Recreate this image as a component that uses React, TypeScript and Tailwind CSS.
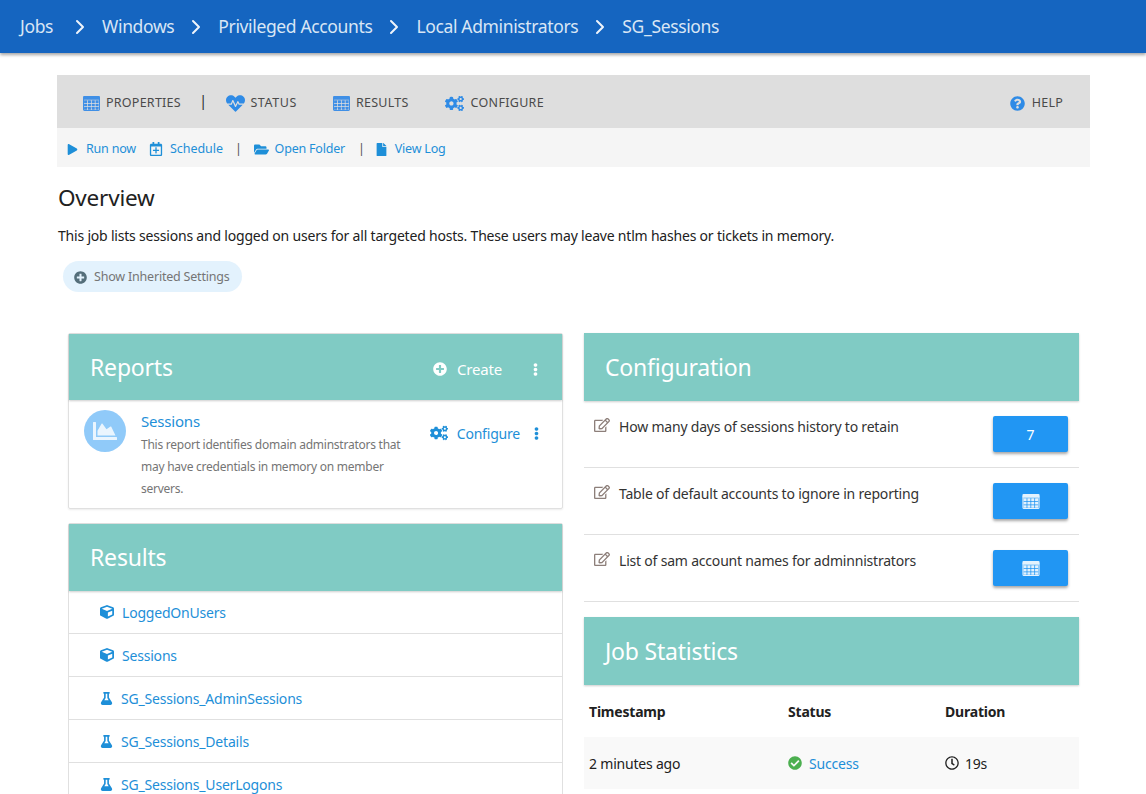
import {
  FaHeartbeat, FaCogs, FaPlay, FaRegCalendarPlus, FaFolderOpen, FaFile, FaPlusCircle,
  FaEllipsisV, FaChartArea, FaCube, FaFlask, FaRegEdit, FaCheckCircle, FaRegClock, FaQuestionCircle,
} from "react-icons/fa"
import { ChevronRight } from "lucide-react"

const crumbs = ["Windows", "Privileged Accounts", "Local Administrators", "SG_Sessions"]

const results = [
  { name: "LoggedOnUsers", icon: "cube" },
  { name: "Sessions", icon: "cube" },
  { name: "SG_Sessions_AdminSessions", icon: "flask" },
  { name: "SG_Sessions_Details", icon: "flask" },
  { name: "SG_Sessions_UserLogons", icon: "flask" },
]

const settings = [
  { label: "How many days of sessions history to retain", value: "7" },
  { label: "Table of default accounts to ignore in reporting" },
  { label: "List of sam account names for adminnistrators" },
]

// font awesome 4 style table: header row plus 3 rows of 4 cells
function TableIcon({ className }: { className?: string }) {
  const cells = []
  for (let row = 0; row < 3; row++) {
    for (let col = 0; col < 4; col++) {
      cells.push(<rect key={`${row}-${col}`} x={1 + col * 3.6} y={4 + row * 3.2} width={2.9} height={2.5} rx={0.2} />)
    }
  }
  return (
    <svg viewBox="0 0 16 14" className={className} fill="currentColor">
      <rect x="0" y="0" width="16" height="3.4" rx="1" />
      <path d="M0 2h1v11h14V2h1v10.6a1.4 1.4 0 0 1-1.4 1.4H1.4A1.4 1.4 0 0 1 0 12.6z" />
      {cells}
    </svg>
  )
}

function PanelHeader({ title, height, children }: { title: string; height: string; children?: React.ReactNode }) {
  return (
    <div className={`${height} bg-[#80cbc4] flex items-center justify-between pl-[21px] pr-[20px] shadow-[0_1px_2px_rgba(0,0,0,0.2)]`}>
      <h2 className="text-[23px] text-white">{title}</h2>
      {children}
    </div>
  )
}

export default function App() {
  return (
    <div className="h-[794px] overflow-hidden bg-white text-[#212121] text-[14px] font-['Noto_Sans',sans-serif] tracking-[-0.2px]">
      {/* breadcrumb */}
      <div className="h-[53px] bg-[#1565c0] text-[#d9e6f5] text-[17.5px] tracking-[-0.36px] flex items-center pl-[20px] shadow-[0_2px_3px_rgba(0,0,0,0.35)]">
        <span className="mr-[5px]">Jobs</span>
        {crumbs.map((c) => (
          <div key={c} className="flex items-center">
            <ChevronRight size={24} strokeWidth={2} className="mx-[10px] text-[#eef4fb]" />
            <span>{c}</span>
          </div>
        ))}
      </div>

      <div className="ml-[57px] w-[1033px] mt-[22px]">
        {/* tabs */}
        <div className="h-[53px] bg-[#dedede] flex items-center pl-[26px] pr-[27px] pt-[3px] text-[12.5px] tracking-[0.25px] text-[#4a4a4a]">
          <TableIcon className="w-[17px] h-[15px] text-[#3f8fe6] mr-[6px]" />
          <span>PROPERTIES</span>
          <span className="ml-[18px] mr-[19px] text-[15px] text-[#333] -mt-[5px]">|</span>
          <FaHeartbeat className="text-[19px] text-[#2f8be6] mr-[5px]" />
          <span className="tracking-[0.6px]">STATUS</span>
          <TableIcon className="w-[17px] h-[15px] text-[#3f8fe6] ml-[36px] mr-[6px]" />
          <span>RESULTS</span>
          <FaCogs className="text-[19px] text-[#2f8be6] ml-[36px] mr-[7px]" />
          <span className="tracking-[0.3px]">CONFIGURE</span>
          <FaQuestionCircle className="text-[15px] text-[#2f8be6] ml-auto mr-[7px]" />
          <span>HELP</span>
        </div>
        {/* actions */}
        <div className="h-[39px] bg-[#f5f5f5] flex items-center pl-[10px] pt-[3px] text-[12.5px] text-[#1e8fd8]">
          <FaPlay className="text-[11px] mr-[8px]" />
          <span>Run now</span>
          <FaRegCalendarPlus className="text-[14px] ml-[13px] mr-[7px]" />
          <span className="tracking-[-0.05px]">Schedule</span>
          <span className="mx-[12px] text-[#555]">|</span>
          <FaFolderOpen className="text-[15px] mr-[6px]" />
          <span>Open Folder</span>
          <span className="ml-[13px] mr-[10px] text-[#555]">|</span>
          <FaFile className="text-[13px] mr-[7px]" />
          <span>View Log</span>
        </div>

        <h1 className="mt-[16px] ml-px text-[22.5px] leading-[30px] text-[#212121]">Overview</h1>
        <p className="mt-[13px] ml-px leading-[20px]">
          This job lists sessions and logged on users for all targeted hosts. These users may leave ntlm hashes or tickets in memory.
        </p>
        <div className="mt-[15px] ml-[6px] w-[179px] h-[31px] rounded-full bg-[#e3f2fd] flex items-center pl-[11px] pt-[2px] text-[12.5px] text-[#757575]">
          <FaPlusCircle className="text-[13px] text-[#546e7a] mr-[7px]" />
          <span>Show Inherited Settings</span>
        </div>

        <div className="mt-[41px] px-[11px] grid grid-cols-2 gap-x-[21px] items-start">
          {/* left column */}
          <div className="flex flex-col gap-[14px]">
            <div className="border border-[#e0e0e0] rounded-[2px] shadow-[0_1px_2px_rgba(0,0,0,0.08)]">
              <PanelHeader title="Reports" height="h-[66px]">
                <div className="flex items-center text-white text-[15px] pt-[4px]">
                  <FaPlusCircle className="text-[14px] mr-[10px]" />
                  <span>Create</span>
                  <FaEllipsisV className="text-[13px] ml-[27px]" />
                </div>
              </PanelHeader>
              <div className="h-[108px] flex pl-[15px] pr-[19px] pt-[10px]">
                <div className="w-[42px] h-[42px] rounded-full bg-[#90caf9] flex items-center justify-center shrink-0">
                  <FaChartArea className="text-[24px] text-[#eaf5fe]" />
                </div>
                <div className="ml-[15px] w-[272px]">
                  <div className="text-[15px] leading-[22px] text-[#1e8fd8]">Sessions</div>
                  <p className="mt-[2px] text-[12px] leading-[22px] tracking-[-0.25px] text-[#757575]">
                    This report identifies domain adminstrators that may have credentials in memory on member servers.
                  </p>
                </div>
                <div className="ml-auto flex items-center h-[46px] text-[14px] text-[#1e8fd8]">
                  <FaCogs className="text-[18px] mr-[9px]" />
                  <span>Configure</span>
                  <FaEllipsisV className="text-[13px] ml-[10px]" />
                </div>
              </div>
            </div>

            <div className="border border-[#e0e0e0] rounded-[2px]">
              <PanelHeader title="Results" height="h-[67px]" />
              {results.map((r) => (
                <div key={r.name} className="h-[43px] border-b border-[#e0e0e0] flex items-center pl-[31px] text-[14px] text-[#1e8fd8]">
                  {r.icon === "cube" ? <FaCube className="text-[14px] mr-[8px]" /> : <FaFlask className="text-[13px] mr-[8px]" />}
                  <span>{r.name}</span>
                </div>
              ))}
            </div>
          </div>

          {/* right column */}
          <div className="flex flex-col">
            <div>
              <PanelHeader title="Configuration" height="h-[68px]" />
              {settings.map((s) => (
                <div key={s.label} className="h-[67px] border-b border-[#e0e0e0] flex pl-[10px] pr-[11px] pt-[15px]">
                  <FaRegEdit className="text-[16px] text-[#8d7f7a] mr-[9px] mt-[1px]" />
                  <span className="mt-px text-[14px] leading-[20px] text-[#333]">{s.label}</span>
                  <div className="ml-auto w-[75px] h-[36px] rounded-[2px] bg-[#2196f3] text-white flex items-center justify-center shadow-[0_2px_3px_rgba(0,0,0,0.35)]">
                    {s.value ?? <TableIcon className="w-[18px] h-[15px] text-[#e3f2fd]" />}
                  </div>
                </div>
              ))}
            </div>
            <div className="mt-[15px]">
              <PanelHeader title="Job Statistics" height="h-[68px]" />
              <div className="h-[52px] flex items-center pl-[5px] font-bold text-[14px]">
                <span className="w-[199px]">Timestamp</span>
                <span className="w-[157px]">Status</span>
                <span>Duration</span>
              </div>
              <div className="h-[52px] bg-[#f9f9f9] flex items-center pl-[5px]">
                <span className="w-[199px]">2 minutes ago</span>
                <div className="w-[157px] flex items-center text-[#1e8fd8]">
                  <FaCheckCircle className="text-[14px] text-[#4caf50] mr-[7px]" />
                  <span>Success</span>
                </div>
                <div className="flex items-center">
                  <FaRegClock className="text-[14px] mr-[6px]" />
                  <span>19s</span>
                </div>
              </div>
            </div>
          </div>
        </div>
      </div>
    </div>
  )
}
